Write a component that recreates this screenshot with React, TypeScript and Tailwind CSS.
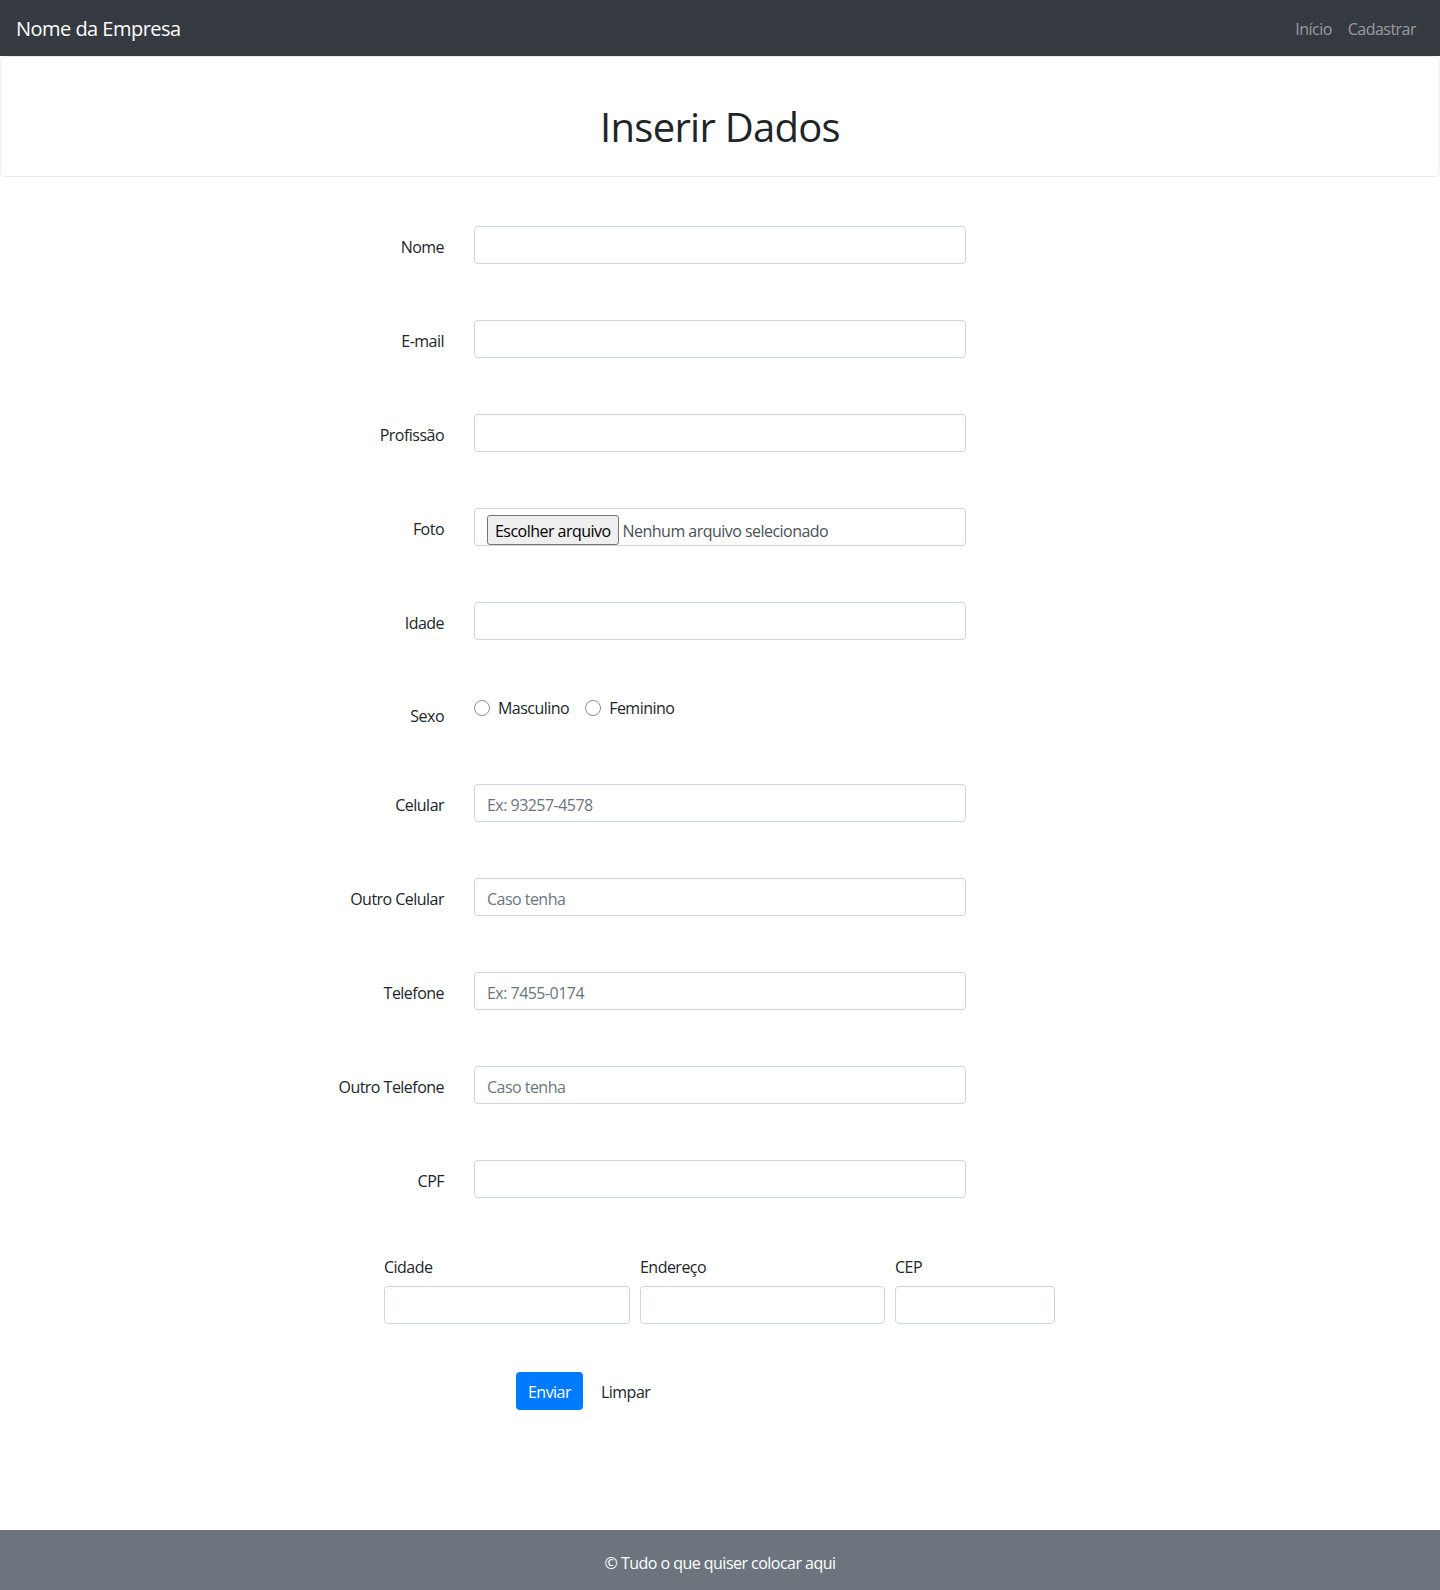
import React from "react";

const font = { fontFamily: '"Open Sans", "Noto Sans", sans-serif' };

function Row({ label, children, last }: { label: string; children: React.ReactNode; last?: boolean }) {
  return (
    <div className={`grid grid-cols-[294px_492px] gap-x-[30px] ${last ? "" : "mb-[56px]"}`}>
      <label className="text-right pt-[9px] leading-6 text-[16px] text-[#212529]">{label}</label>
      {children}
    </div>
  );
}

function TextInput({ placeholder }: { placeholder?: string }) {
  return (
    <input
      type="text"
      placeholder={placeholder}
      className="block w-full h-[38px] px-3 pt-[3px] border border-[#ced4da] rounded-[4px] text-[16px] tracking-[-0.033em] text-[#495057] placeholder:text-[#6c757d] bg-white outline-none"
    />
  );
}

export default function App() {
  return (
    <div className="min-h-[1590px] flex flex-col bg-white text-[#212529] tracking-[-0.033em]" style={font}>
      <nav className="h-[56px] bg-[#343a40] flex items-center justify-between pl-4 pr-4 pt-[2px]">
        <span className="text-[20px] text-white leading-[30px]">Nome da Empresa</span>
        <div className="flex">
          <a className="px-2 text-[16px] text-[#9a9da0] leading-6">Início</a>
          <a className="px-2 text-[16px] text-[#9a9da0] leading-6">Cadastrar</a>
        </div>
      </nav>

      <div className="h-[121px] border border-[#eeeeee] rounded-[5px] flex justify-center pt-[46px]">
        <h1 className="text-[40px] leading-[48px] font-medium tracking-[-0.018em] text-[#212529]">Inserir Dados</h1>
      </div>

      <main className="w-[1140px] mx-auto pt-[49px]">
        <Row label="Nome"><TextInput /></Row>
        <Row label="E-mail"><TextInput /></Row>
        <Row label="Profissão"><TextInput /></Row>
        <Row label="Foto">
          <div className="h-[38px] border border-[#ced4da] rounded-[4px] flex items-center pl-3 pt-[6px]">
            <span className="h-[30px] px-[7px] pt-[2px] flex items-center bg-[#efefef] border border-[#767676] rounded-[3px] text-[16px] text-[#000000]">
              Escolher arquivo
            </span>
            <span className="ml-[4px] pt-[2px] text-[16px] text-[#495057]">Nenhum arquivo selecionado</span>
          </div>
        </Row>
        <Row label="Idade"><TextInput /></Row>

        <div className="grid grid-cols-[294px_492px] gap-x-[30px] h-[32px] mb-[56px]">
          <label className="text-right pt-[8px] leading-6 text-[16px] text-[#212529]">Sexo</label>
          <div className="flex items-start leading-6 text-[16px] text-[#212529]">
            <span className="flex items-center">
              <span className="w-[16px] h-[16px] rounded-full border border-[#8f8f8f] bg-white"></span>
              <span className="ml-[8px]">Masculino</span>
            </span>
            <span className="flex items-center ml-[16px]">
              <span className="w-[16px] h-[16px] rounded-full border border-[#8f8f8f] bg-white"></span>
              <span className="ml-[8px]">Feminino</span>
            </span>
          </div>
        </div>

        <Row label="Celular"><TextInput placeholder="Ex: 93257-4578" /></Row>
        <Row label="Outro Celular"><TextInput placeholder="Caso tenha" /></Row>
        <Row label="Telefone"><TextInput placeholder="Ex: 7455-0174" /></Row>
        <Row label="Outro Telefone"><TextInput placeholder="Caso tenha" /></Row>
        <Row label="CPF"><TextInput /></Row>

        <div className="flex gap-[10px] pl-[234px]">
          <div className="w-[246px]">
            <label className="block leading-6 pt-[1px] mb-[7px] text-[16px]">Cidade</label>
            <TextInput />
          </div>
          <div className="w-[245px]">
            <label className="block leading-6 pt-[1px] mb-[7px] text-[16px]">Endereço</label>
            <TextInput />
          </div>
          <div className="w-[160px]">
            <label className="block leading-6 pt-[1px] mb-[7px] text-[16px]">CEP</label>
            <TextInput />
          </div>
        </div>

        <div className="flex items-center pl-[366px] mt-[48px] gap-[6px]">
          <button className="h-[38px] px-3 pt-[2px] bg-[#007bff] text-white rounded-[4px] text-[16px] leading-6">Enviar</button>
          <button className="h-[38px] px-3 pt-[2px] text-[#212529] text-[16px] leading-6">Limpar</button>
        </div>
      </main>

      <footer className="mt-auto h-[60px] bg-[#6c757d] flex items-center justify-center pt-[5px] text-white text-[16px]">
        © Tudo o que quiser colocar aqui
      </footer>
    </div>
  );
}
